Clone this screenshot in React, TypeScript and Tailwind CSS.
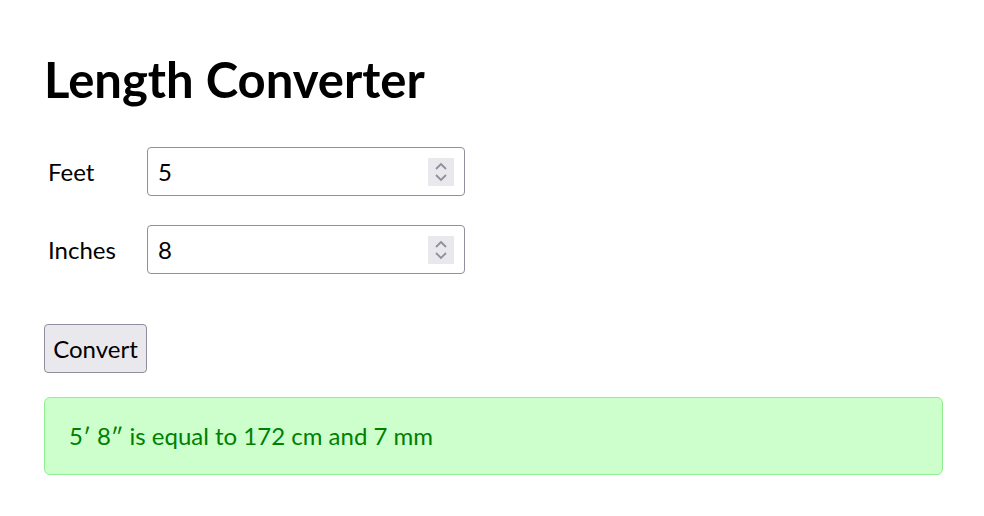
import { useState } from "react";

function Spinner() {
  return (
    <div className="flex h-[28px] w-[26px] flex-col items-center justify-center gap-[4px] bg-[#e9e9ed]">
      <svg width="14" height="8" viewBox="0 0 14 8" fill="none">
        <path d="M2 7L7 2L12 7" stroke="#8f8f9d" strokeWidth="1.8" />
      </svg>
      <svg width="14" height="8" viewBox="0 0 14 8" fill="none">
        <path d="M2 1L7 6L12 1" stroke="#8f8f9d" strokeWidth="1.8" />
      </svg>
    </div>
  );
}

function NumberField({
  label,
  value,
  onChange,
}: {
  label: string;
  value: string;
  onChange: (v: string) => void;
}) {
  return (
    <div className="flex h-[49px] items-center">
      <label className="w-[103px] pl-[4px]">{label}</label>
      <div className="flex h-[49px] w-[318px] items-center rounded-[4px] border border-[#8f8f9d] bg-white pl-[10px] pr-[10px]">
        <input
          type="text"
          value={value}
          onChange={(e) => onChange(e.target.value)}
          className="min-w-0 flex-1 bg-transparent outline-none"
        />
        <Spinner />
      </div>
    </div>
  );
}

export default function App() {
  const [feet, setFeet] = useState("5");
  const [inches, setInches] = useState("8");

  return (
    <div
      className="min-h-[516px] bg-white pl-[44px] pr-[41px] pt-[49px] text-[24px] text-black"
      style={{ fontFamily: "Lato, 'Open Sans', sans-serif" }}
    >
      <h1 className="h-[60px] text-[49px] font-bold leading-[60px]">Length Converter</h1>

      <div className="mt-[38px] flex flex-col gap-[29px]">
        <NumberField label="Feet" value={feet} onChange={setFeet} />
        <NumberField label="Inches" value={inches} onChange={setInches} />
      </div>

      <button className="mt-[50px] h-[49px] w-[103px] rounded-[4px] border border-[#8f8f9d] bg-[#e9e9ed]">
        Convert
      </button>

      <div className="mt-[24px] flex h-[78px] items-center rounded-[6px] border border-[#90ee90] bg-[#ccffcc] px-[24px] text-[#008000]">
        5′ 8″ is equal to 172 cm and 7 mm
      </div>
    </div>
  );
}
